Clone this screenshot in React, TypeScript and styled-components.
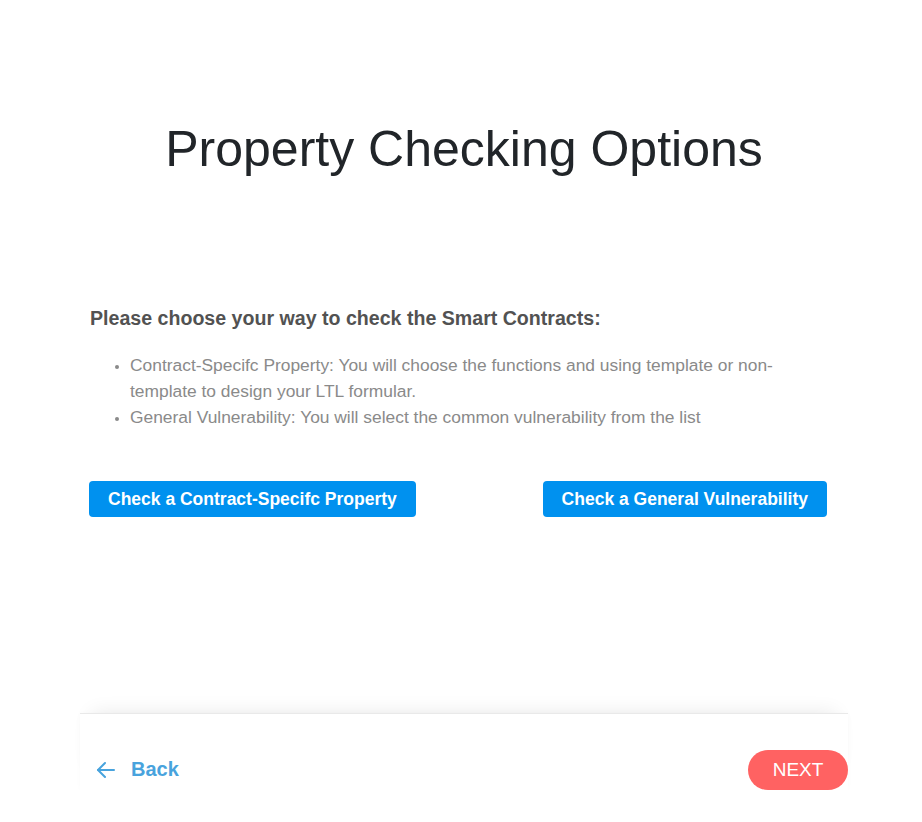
import styled, { createGlobalStyle } from "styled-components";

const GlobalStyle = createGlobalStyle`
  html, body {
    margin: 0;
    padding: 0;
    background: #ffffff;
  }

  body {
    font-family: "Liberation Sans", Arial, sans-serif;
  }
`;

const Page = styled.div`
  width: 768px;
  margin-left: 80px;
  padding-top: 117px;
`;

const Title = styled.h1`
  margin: 0;
  text-align: center;
  font-size: 50px;
  font-weight: 400;
  line-height: 64px;
  color: #212529;
`;

const Body = styled.div`
  padding: 126px 21px 0 9px;
  height: 532px;
  box-sizing: border-box;
`;

const Question = styled.h3`
  margin: 0 0 23px 1px;
  font-size: 19.6px;
  font-weight: 700;
  line-height: 22px;
  color: #525252;
`;

const List = styled.ul`
  margin: 0;
  padding-left: 41px;
  font-size: 17.4px;
  line-height: 26px;
  color: #8a8a8a;

  > li::marker {
    font-size: 13px;
  }
`;

const Actions = styled.div`
  display: flex;
  justify-content: space-between;
  margin-top: 51px;
`;

const ChoiceButton = styled.button`
  height: 36px;
  padding: 0 19px;
  border: none;
  border-radius: 4px;
  background: #0091ef;
  color: #ffffff;
  font-family: "Liberation Sans", Arial, sans-serif;
  font-size: 17.5px;
  font-weight: 700;
  cursor: pointer;
`;

const Footer = styled.div`
  display: flex;
  justify-content: space-between;
  align-items: center;
  height: 77px;
  padding: 35px 0 0 16px;
  box-sizing: border-box;
  border-top: 1px solid #e9e9e9;
  box-shadow: 0 -12px 20px -12px rgba(0, 0, 0, 0.09),
    0 0 6px rgba(0, 0, 0, 0.02);
`;

const BackLink = styled.a`
  display: flex;
  align-items: center;
  gap: 15px;
  color: #48a3dd;
  font-size: 20px;
  font-weight: 700;
  text-decoration: none;
  cursor: pointer;

  > svg {
    width: 20px;
    height: 20px;
  }
`;

const NextButton = styled.button`
  width: 100px;
  height: 40px;
  border: none;
  border-radius: 20px;
  background: #ff6262;
  color: #ffffff;
  font-family: "Liberation Sans", Arial, sans-serif;
  font-size: 19px;
  font-weight: 400;
  cursor: pointer;
`;

const App = () => {
  return (
    <>
      <GlobalStyle />
      <Page>
        <Title>Property Checking Options</Title>
        <Body>
          <Question>Please choose your way to check the Smart Contracts:</Question>
          <List>
            <li>
              Contract-Specifc Property: You will choose the functions and using
              template or non-template to design your LTL formular.
            </li>
            <li>
              General Vulnerability: You will select the common vulnerability
              from the list
            </li>
          </List>
          <Actions>
            <ChoiceButton>Check a Contract-Specifc Property</ChoiceButton>
            <ChoiceButton>Check a General Vulnerability</ChoiceButton>
          </Actions>
        </Body>
        <Footer>
          <BackLink>
            <svg
              viewBox="0 0 20 20"
              fill="none"
              stroke="currentColor"
              strokeWidth="2"
              strokeLinecap="round"
              strokeLinejoin="round"
            >
              <path d="M18 10H2" />
              <path d="M9 3l-7 7 7 7" />
            </svg>
            Back
          </BackLink>
          <NextButton>NEXT</NextButton>
        </Footer>
      </Page>
    </>
  );
};

export default App;
